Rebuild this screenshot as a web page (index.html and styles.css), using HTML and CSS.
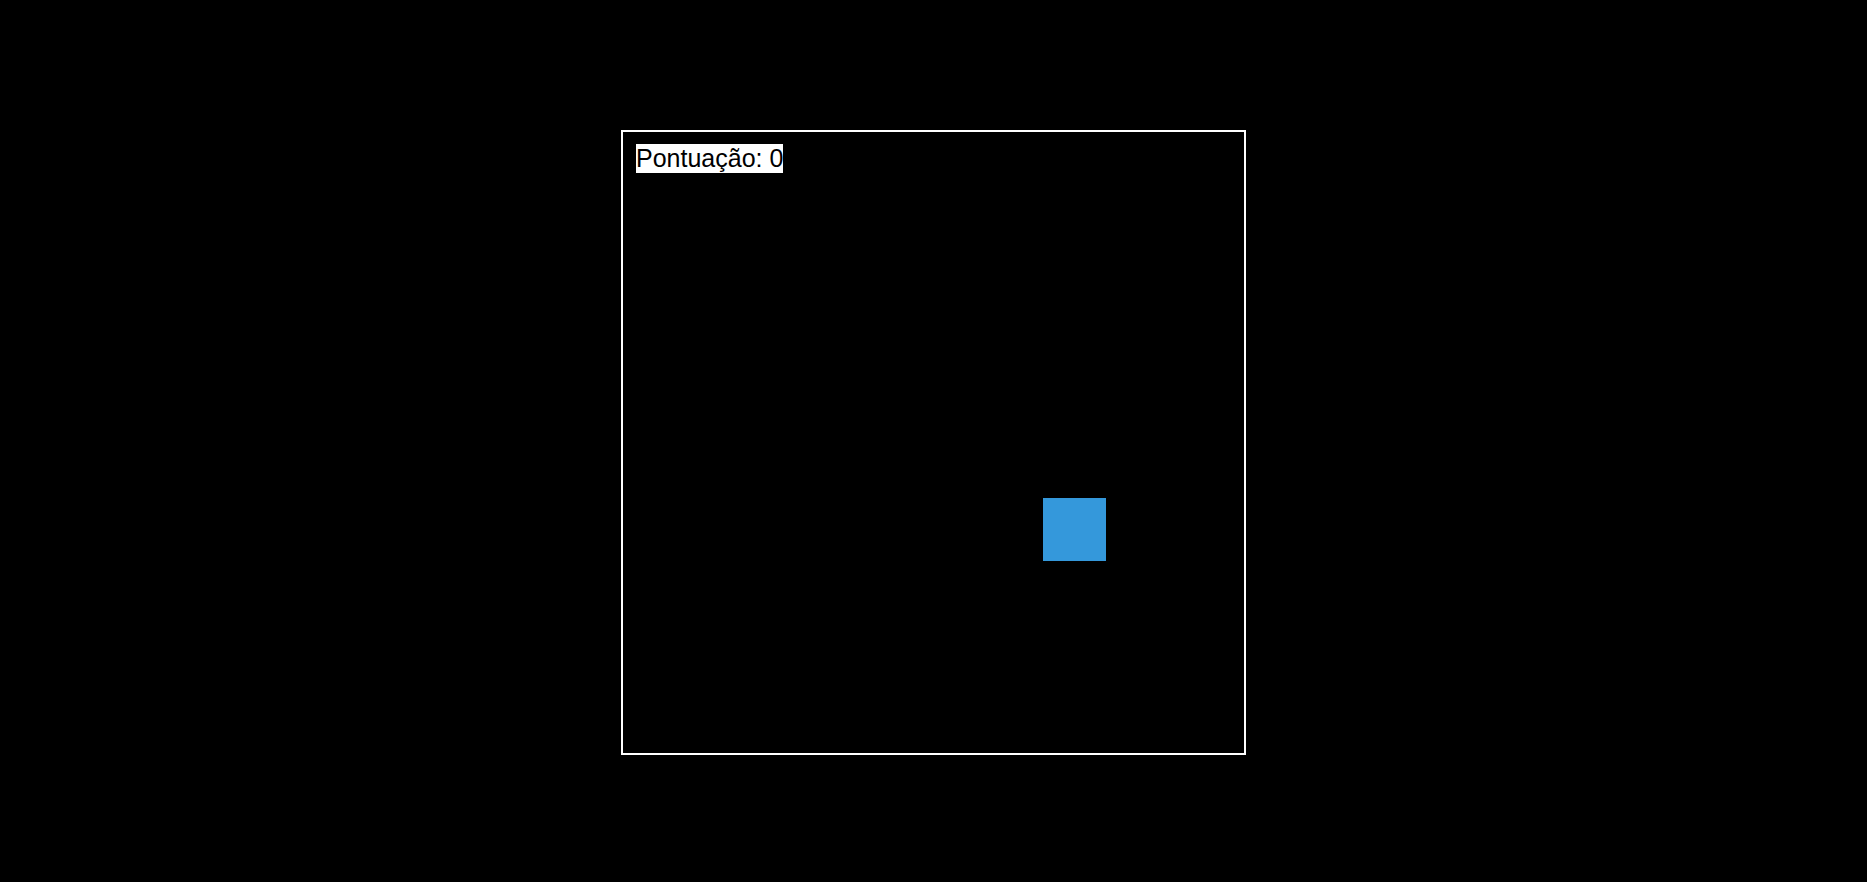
FILE: index.html
```html
<!DOCTYPE html>
<html lang="pt">
<head>
<meta charset="utf-8">
<link rel="stylesheet" href="styles.css">
</head>
<body>
<div class="stage">
  <div class="board">
    <div class="score">Pontuação: 0</div>
    <div class="target" style="left:420px; top:366px;"></div>
  </div>
</div>
</body>
</html>
```
FILE: styles.css
```css
html, body {
  margin: 0;
  padding: 0;
  background: #000;
  height: 100%;
}
.stage {
  display: flex;
  justify-content: center;
  padding-top: 130px;
}
.board {
  position: relative;
  width: 621px;
  height: 621px;
  border: 2px solid #fff;
  background: #000;
}
.score {
  position: absolute;
  left: 13px;
  top: 12px;
  background: #fff;
  color: #000;
  font-family: "Liberation Sans", Arial, sans-serif;
  font-size: 25px;
  line-height: 29px;
}
.target {
  position: absolute;
  width: 63px;
  height: 63px;
  background: #3498db;
}
```
